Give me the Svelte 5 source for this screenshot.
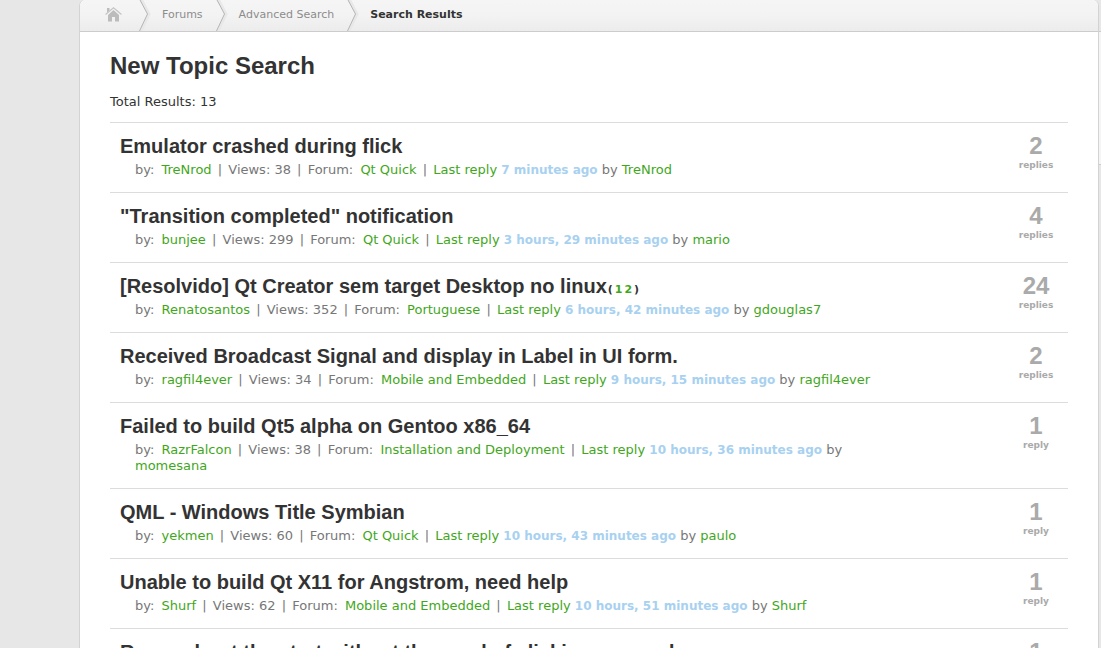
<script>
  const crumbs = [
    { label: 'Forums', href: '#forums' },
    { label: 'Advanced Search', href: '#search' }
  ];

  const total = 13;

  const topics = [
    { title: 'Emulator crashed during flick', author: 'TreNrod', views: 38, forum: 'Qt Quick', ago: '7 minutes ago', last: 'TreNrod', replies: 2 },
    { title: '"Transition completed" notification', author: 'bunjee', views: 299, forum: 'Qt Quick', ago: '3 hours, 29 minutes ago', last: 'mario', replies: 4 },
    { title: '[Resolvido] Qt Creator sem target Desktop no linux', pages: [1, 2], author: 'Renatosantos', views: 352, forum: 'Portuguese', ago: '6 hours, 42 minutes ago', last: 'gdouglas7', replies: 24 },
    { title: 'Received Broadcast Signal and display in Label in UI form.', author: 'ragfil4ever', views: 34, forum: 'Mobile and Embedded', ago: '9 hours, 15 minutes ago', last: 'ragfil4ever', replies: 2 },
    { title: 'Failed to build Qt5 alpha on Gentoo x86_64', author: 'RazrFalcon', views: 38, forum: 'Installation and Deployment', ago: '10 hours, 36 minutes ago', last: 'momesana', replies: 1 },
    { title: 'QML - Windows Title Symbian', author: 'yekmen', views: 60, forum: 'Qt Quick', ago: '10 hours, 43 minutes ago', last: 'paulo', replies: 1 },
    { title: 'Unable to build Qt X11 for Angstrom, need help', author: 'Shurf', views: 62, forum: 'Mobile and Embedded', ago: '10 hours, 51 minutes ago', last: 'Shurf', replies: 1 },
    { title: 'Rerun about the start without the need of clicking on word', replies: 1 }
  ];
</script>

<div class="page">
  <main class="panel">
    <nav class="breadcrumb" aria-label="Breadcrumb">
      <a class="home" href="#home" aria-label="Home">
        <svg width="17" height="15" viewBox="0 0 17 15" aria-hidden="true">
          <path d="M0.5 7.5 L8.5 0.8 L16.5 7.5" fill="none" stroke="#c4c4c4" stroke-width="1.2" />
          <path d="M2 1h2.5v2.5l-2.5 2z" fill="#bcbcbc" />
          <path d="M8.5 3 L14 8 V14.5 H10 V10 H7 V14.5 H3 V8 Z" fill="#bcbcbc" />
        </svg>
      </a>
      {#each crumbs as crumb}
        {@render arrow()}
        <a class="crumb" href={crumb.href}>{crumb.label}</a>
      {/each}
      {@render arrow()}
      <span class="crumb current">Search Results</span>
    </nav>

    <div class="content">
      <h1>New Topic Search</h1>
      <p class="total">Total Results: {total}</p>

      <ul class="topics">
        {#each topics as topic}
          <li class="topic">
            <div class="info">
              <h2>
                <a href="#topic">{topic.title}</a>{#if topic.pages}<span class="pages">
                    <span>(</span>
                    {#each topic.pages as page}<a href="#page-{page}">{page}</a>{/each}
                    <span>)</span>
                  </span>{/if}
              </h2>
              {#if topic.author}
                <p class="meta">
                  <span class="label">by:</span> <a href="#user">{topic.author}</a>
                  <span class="sep">|</span> Views: {topic.views}
                  <span class="sep">|</span> <span class="label">Forum:</span>
                  <a href="#forum">{topic.forum}</a>
                  <span class="sep">|</span> <a href="#last">Last reply</a>
                  <strong>{topic.ago}</strong> by <a href="#user">{topic.last}</a>
                </p>
              {/if}
            </div>
            <div class="replies">
              <span class="count">{topic.replies}</span>
              <span class="unit">{topic.replies === 1 ? 'reply' : 'replies'}</span>
            </div>
          </li>
        {/each}
      </ul>
    </div>
  </main>
  <div class="rail"></div>
</div>

{#snippet arrow()}
  <svg class="arrow" width="12" height="31" viewBox="0 0 12 31" aria-hidden="true">
    <path d="M2 -1 L10 14 L2 31" fill="none" stroke="#e8e8e8" stroke-width="3" />
    <path d="M0.5 -1 L8.5 14 L0.5 31" fill="none" stroke="#b5b5b5" stroke-width="1" />
  </svg>
{/snippet}

<style>
  :global(body) {
    background: #e7e7e7;
  }

  .page {
    display: flex;
    height: 100vh;
    overflow: hidden;
    font-family: Verdana, 'DejaVu Sans', sans-serif;
    font-size: 13px;
    color: #333;
  }

  a {
    color: #3fa71b;
    text-decoration: none;
  }

  .panel {
    flex: 1;
    min-width: 0;
    height: max-content;
    margin-left: 79px;
    background: #fff;
    border: solid #d3d3d3;
    border-width: 0 1px;
    border-radius: 6px 6px 0 0;
  }

  .breadcrumb {
    display: flex;
    align-items: center;
    height: 31px;
    background: linear-gradient(#f5f5f5, #f3f3f3 50%, #ececec);
    border-bottom: 1px solid #ccc;
    border-radius: 6px 6px 0 0;
    overflow: hidden;
  }

  .home {
    display: flex;
    padding: 0 17px 3px 25px;
  }

  .arrow {
    flex: none;
  }

  .crumb {
    padding: 0 13px 3px 11px;
    font-size: 11px;
    color: #8c8c8c;
  }

  .crumb.current {
    font-weight: bold;
    color: #333;
  }

  .content {
    padding: 19px 30px 0;
  }

  h1,
  h2 {
    margin: 0;
    font-family: Arial, 'Liberation Sans', sans-serif;
    font-weight: bold;
  }

  h1 {
    font-size: 24px;
    line-height: 30px;
  }

  .total {
    margin: 13px 0 12px;
    line-height: 16px;
  }

  .topics {
    margin: 0;
    padding: 0;
    list-style: none;
  }

  .topic {
    display: flex;
    justify-content: space-between;
    padding: 12px 0 14px 10px;
    border-top: 1px solid #dcdcdc;
  }

  .info {
    width: 764px;
  }

  h2 {
    font-size: 20px;
    line-height: 23px;
  }

  h2 > a {
    color: #333;
  }

  .pages {
    display: inline-flex;
    gap: 2px;
    margin-left: 1px;
    font-family: Verdana, 'DejaVu Sans', sans-serif;
    font-size: 11px;
    line-height: 12px;
  }

  .meta {
    margin: 4px 0 0 15px;
    line-height: 16px;
    color: #777;
  }

  .label {
    margin-right: 3px;
  }

  .sep {
    margin: 0 2px;
  }

  .meta strong {
    font-size: 12px;
    color: #a8d1f0;
  }

  .replies {
    width: 64px;
    text-align: center;
    font-weight: bold;
    color: #aaa;
  }

  .count,
  .unit {
    display: block;
  }

  .count {
    font-family: Arial, 'Liberation Sans', sans-serif;
    font-size: 24px;
    line-height: 22px;
  }

  .unit {
    font-size: 9px;
    line-height: 16px;
  }

  .rail {
    width: 2px;
    height: 132px;
    margin-top: 31px;
    background: #f5f5f5;
    border: solid #ccc;
    border-width: 1px 0;
  }
</style>
